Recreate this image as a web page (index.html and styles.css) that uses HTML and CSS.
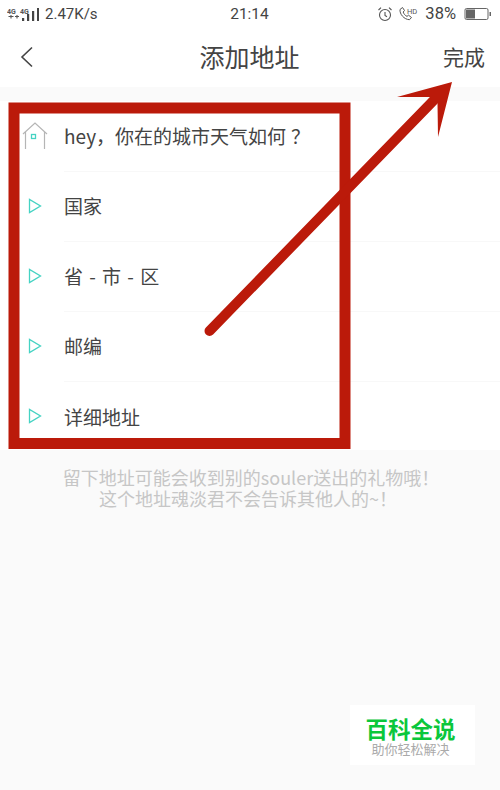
FILE: index.html
```html
<!DOCTYPE html>
<html lang="zh">
<head>
<meta charset="utf-8">
<title>添加地址</title>
<link rel="stylesheet" href="styles.css">
</head>
<body>
<div class="screen">
  <header class="top">
    <div class="status">
      <div class="status-left">
        <svg class="signal" width="32" height="16" viewBox="0 0 32 16">
          <text x="0" y="7.500" class="net">4G</text>
          <text x="13" y="7.500" class="net">4G</text>
          <path d="M1.500 10.500h5M4 9v3.500M8 10.500h4M10 9v3.500" stroke="#555" stroke-width="1.100"/>
          <rect x="15" y="12" width="2.200" height="3" fill="#444"/>
          <rect x="20" y="8" width="2.200" height="7" fill="#444"/>
          <rect x="25" y="5" width="2.200" height="10" fill="#444"/>
          <rect x="30" y="2" width="2.200" height="13" fill="#444"/>
        </svg>
        <span>2.47K/s</span>
      </div>
      <div class="clock">21:14</div>
      <div class="status-right">
        <svg width="16" height="16" viewBox="0 0 16 16" fill="none" stroke="#555" stroke-width="1.100">
          <circle cx="8" cy="9" r="5.500"/>
          <path d="M8 6v3.400l2 1.400M1.500 4 4 1.600M14.500 4 12 1.600"/>
        </svg>
        <svg class="call" width="20" height="16" viewBox="0 0 20 16" fill="none" stroke="#555" stroke-width="1">
          <path d="M2 3.500 4.500 1.500l2 3-1.300 1.500c.6 2 2 3.500 3.800 4.400l1.500-1.200 3 2.300-2 2.200C6 13.500 1.500 8 2 3.500Z"/>
          <text x="9" y="7.500" class="hd">HD</text>
        </svg>
        <span class="pct">38%</span>
        <svg width="28" height="14" viewBox="0 0 28 14">
          <rect x="1" y="1.500" width="23" height="11" rx="1.500" fill="none" stroke="#666" stroke-width="1"/>
          <rect x="2" y="2.500" width="9" height="9" fill="#666"/>
          <rect x="25.500" y="5" width="1.500" height="4" fill="#666"/>
        </svg>
      </div>
    </div>
    <div class="nav">
      <svg class="back" width="14" height="22" viewBox="0 0 14 22" fill="none" stroke="#444" stroke-width="1.600">
        <path d="M12 1.500 2 11l10 9.500"/>
      </svg>
      <h1 class="title">添加地址</h1>
      <span class="done">完成</span>
    </div>
  </header>
  <div class="band"></div>
  <ul class="form">
    <li class="row">
      <svg class="row-icon" width="28" height="30" viewBox="0 0 28 30" fill="none">
        <path d="M1 13 13 2l12 11" stroke="#b5b5b5" stroke-width="1.200"/>
        <path d="M3.500 11v17M22.500 11v17" stroke="#b5b5b5" stroke-width="1.200"/>
        <rect x="9.500" y="13.500" width="4" height="4" stroke="#45d3c3" stroke-width="1.300"/>
      </svg>
      <span class="field"><span>hey，你在的城市天气如何<span class="qm">？</span></span></span>
    </li>
    <li class="row">
      <svg class="row-icon" width="28" height="16" viewBox="0 0 28 16" fill="none"><path class="tri" d="M7.500 1.500v13L18.500 8Z"/></svg>
      <span class="field">国家</span>
    </li>
    <li class="row">
      <svg class="row-icon" width="28" height="16" viewBox="0 0 28 16" fill="none"><path class="tri" d="M7.500 1.500v13L18.500 8Z"/></svg>
      <span class="field field-spaced">省 - 市 - 区</span>
    </li>
    <li class="row">
      <svg class="row-icon" width="28" height="16" viewBox="0 0 28 16" fill="none"><path class="tri" d="M7.500 1.500v13L18.500 8Z"/></svg>
      <span class="field">邮编</span>
    </li>
    <li class="row">
      <svg class="row-icon" width="28" height="16" viewBox="0 0 28 16" fill="none"><path class="tri" d="M7.500 1.500v13L18.500 8Z"/></svg>
      <span class="field">详细地址</span>
    </li>
  </ul>
  <div class="hint">
    <p class="hint-line">留下地址可能会收到别的souler送出的礼物哦！</p>
    <p class="hint-line hint-line-second">这个地址魂淡君不会告诉其他人的~！</p>
  </div>

  <svg class="markup" width="500" height="790" viewBox="0 0 500 790" fill="none">
    <rect x="14" y="108" width="331" height="335.500" stroke="#bb1a0a" stroke-width="11"/>
    <path d="M209.500 331 434 100" stroke="#bb1a0a" stroke-width="10" stroke-linecap="round"/>
    <path d="M452 82 397 97 430 97 437.500 103 438 137Z" fill="#bb1a0a"/>
  </svg>

  <aside class="stamp">
    <div class="stamp-main">百科全说</div>
    <div class="stamp-sub">助你轻松解决</div>
  </aside>
</div>
</body>
</html>
```
FILE: styles.css
```css
* { box-sizing: border-box; }
html, body { margin: 0; padding: 0; }
body {
  width: 500px;
  height: 790px;
  overflow: hidden;
  font-family: "Noto Sans CJK SC", "Noto Sans", Roboto, sans-serif;
}
.screen {
  position: relative;
  width: 500px;
  height: 790px;
  background: #fafafa;
  display: flex;
  flex-direction: column;
}
.top { height: 87px; background: #fff; display: flex; flex-direction: column; }
.status {
  height: 27px;
  display: grid;
  grid-template-columns: 1fr auto 1fr;
  align-items: center;
  padding: 0 8px 0 7px;
  color: #444;
  font-family: Roboto, sans-serif;
  font-size: 15px;
}
.status-left { display: flex; align-items: center; gap: 6px; }
.status-right { display: flex; align-items: center; justify-content: flex-end; gap: 4px; }
.call { margin-left: 1px; }
.pct { margin: 0 4px 0 3px; font-size: 16.500px; }
.clock { font-size: 15.500px; }
.net { font: 700 7px Roboto, sans-serif; fill: #555; }
.hd { font: 400 7.500px Roboto, sans-serif; fill: #555; stroke: none; }
.nav {
  flex: 1;
  display: grid;
  grid-template-columns: 1fr auto 1fr;
  align-items: center;
  padding: 0 15px 1px 20px;
}
.back { display: block; }
.title { margin: 0; padding-right: 6px; font-size: 25px; font-weight: 400; color: #444; line-height: 1; }
.done { justify-self: end; font-size: 21px; color: #444; line-height: 1; }
.band { height: 14px; }
.form { list-style: none; margin: 0; padding: 1px 0 0; background: #fff; height: 349px; }
.row {
  height: 70px;
  display: flex;
  align-items: center;
  padding-left: 22px;
  gap: 14px;
}
.row-icon { flex: none; display: block; margin-bottom: 2px; }
.tri { stroke: #45d3c3; stroke-width: 1.300; }
.field {
  flex: 1;
  align-self: stretch;
  display: flex;
  align-items: center;
  font-size: 19px;
  color: #444;
  border-bottom: 1px solid #f8f8f8;
  padding-bottom: 2px;
}
.qm { margin-left: 5px; }
.field-spaced { word-spacing: 2px; white-space: pre; }
.row:last-child .field { border-bottom: 0; }
.hint {
  margin: 17px 0 0;
  padding-left: 2px;
  text-align: center;
  font-size: 18px;
  color: #c6c6c6;
}
.hint-line { margin: 0; line-height: 21px; }
.hint-line-second { padding-right: 6px; }
.markup { position: absolute; left: 0; top: 0; pointer-events: none; }
.stamp {
  position: absolute;
  left: 350px;
  top: 705px;
  width: 125px;
  height: 60px;
  background: #fff;
  text-align: center;
  padding-top: 10px;
}
.stamp-main { font-size: 22.500px; font-weight: 700; color: #0bc73c; line-height: 26px; padding-right: 4px; }
.stamp-sub { font-size: 13px; color: #aaa; line-height: 16px; padding-right: 4px; }
```
